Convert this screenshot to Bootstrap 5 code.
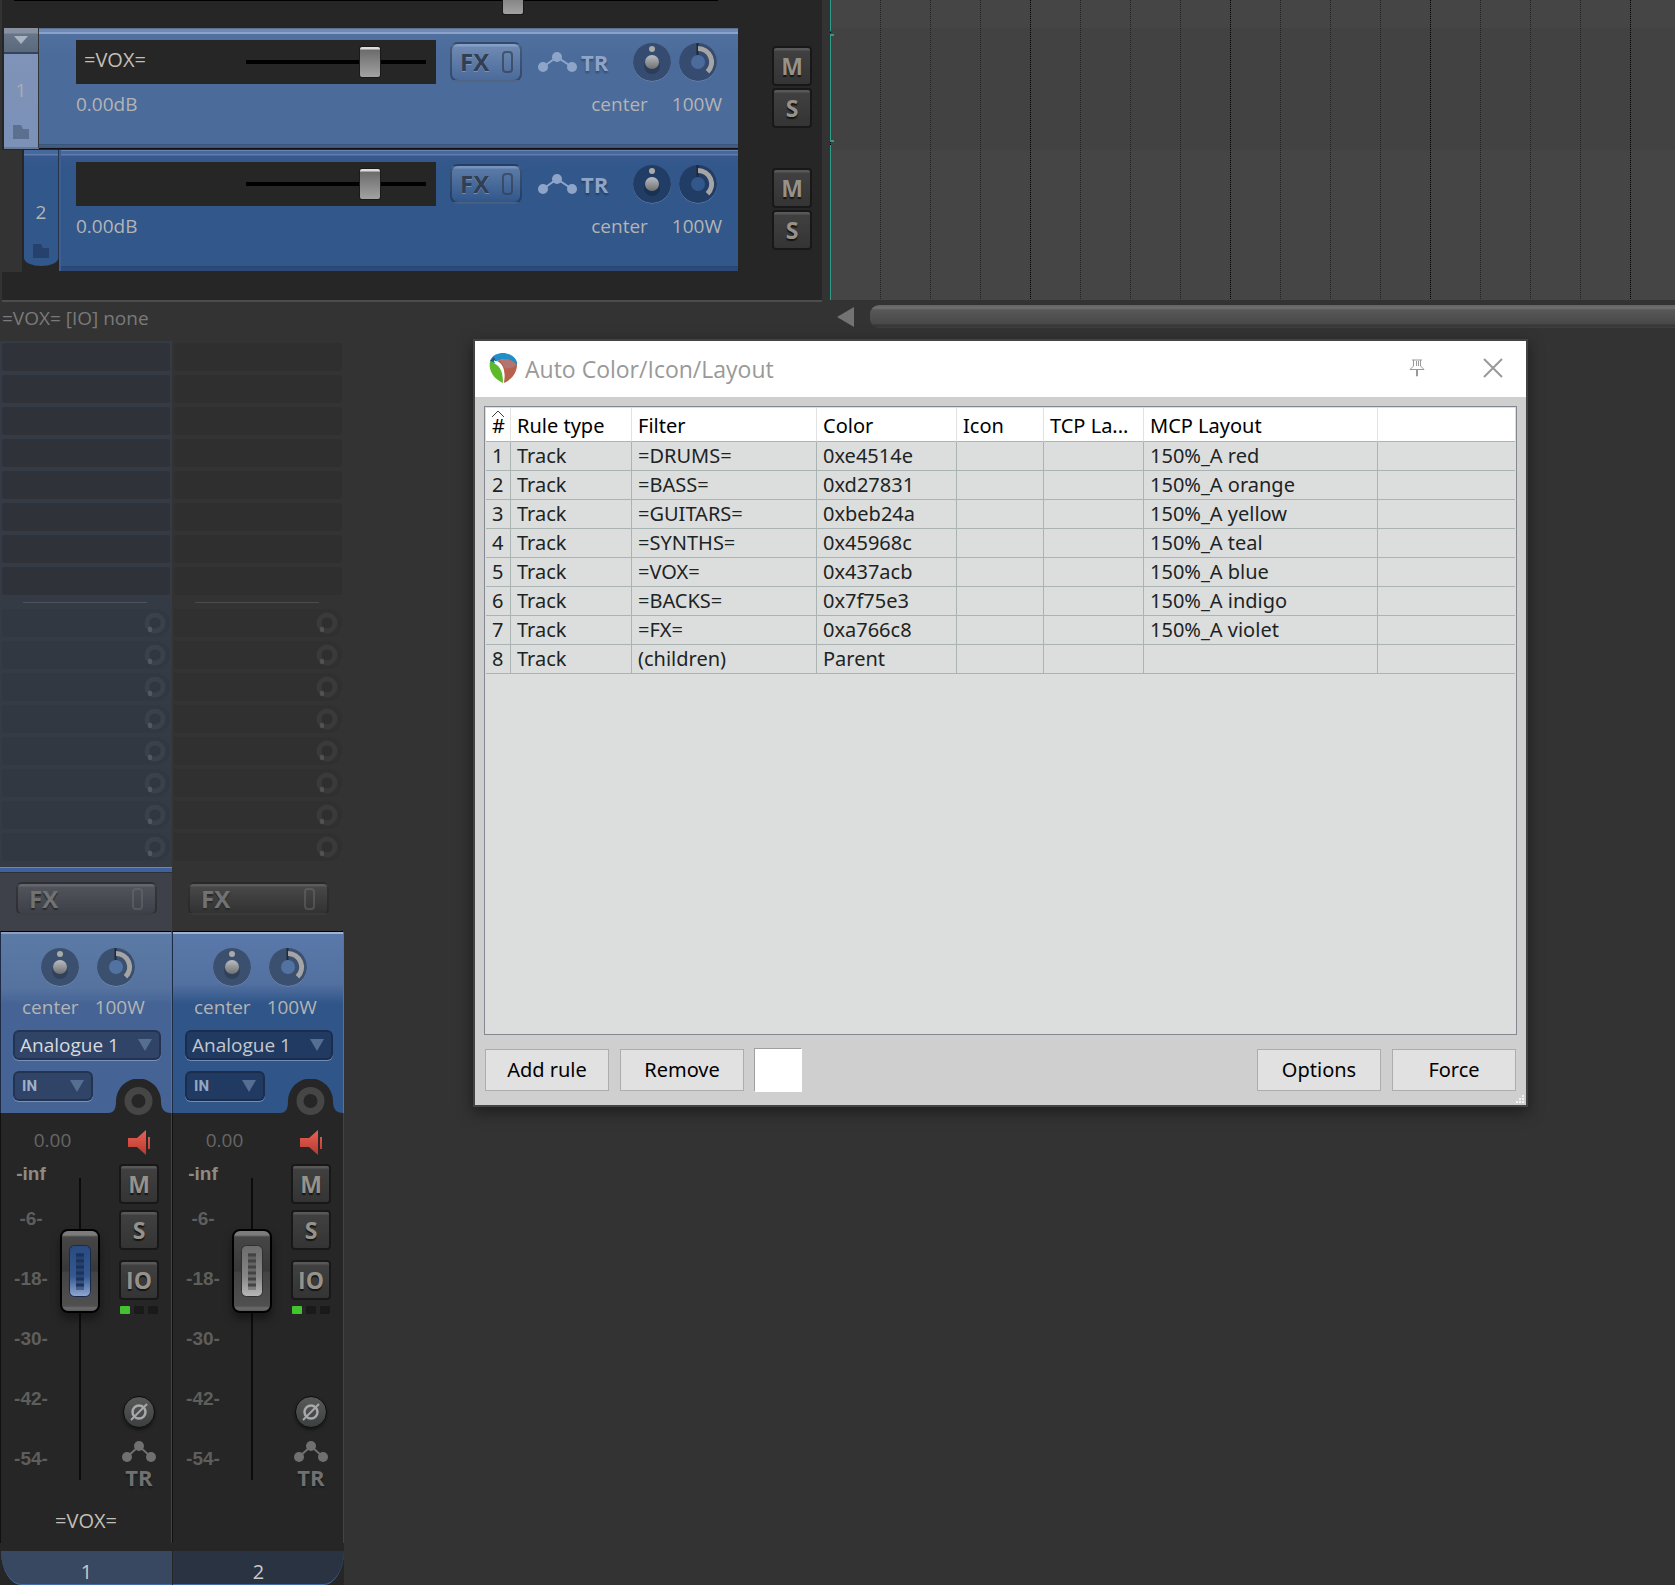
<!DOCTYPE html>
<html lang="en">
<head>
<meta charset="utf-8">
<meta name="viewport" content="width=device-width, initial-scale=1">
<title>Auto Color/Icon/Layout</title>
<link rel="stylesheet" href="https://cdn.jsdelivr.net/npm/bootstrap@5.3.0/dist/css/bootstrap.min.css">
<style>
body{background:#333;color:#b4b4b4;font:19px/24px "Open Sans","Noto Sans",sans-serif;overflow:hidden}
button,select,input{font-family:inherit;color:inherit}
button{padding:0}
svg{display:block;flex:none}

/* horizontal faders */
.hfader{appearance:none;-webkit-appearance:none;display:block;height:30px;margin:0;background:linear-gradient(#000,#000) 0 50%/100% 4px no-repeat}
.hfader::-webkit-slider-thumb{-webkit-appearance:none;width:20px;height:30px;border-radius:2px;background:linear-gradient(#ddd 2px,#6c6c6c 3px,#a2a2a2);box-shadow:0 0 0 1px #1a1a1a}

/* track control panel */
.tcp{flex:0 0 822px;margin-right:8px}
.tcp-list{height:302px;margin-left:2px;background:#262626;border-bottom:2px solid #4c4c4c;overflow:hidden}
.stub{height:28px;display:flow-root}
.stub .hfader{width:704px;margin:-16px 0 0 12px}
.trk{height:122px;--left:2px}
.gutter{width:35px;margin-left:var(--left);text-align:center;border-right:1px solid #26344c}
.trk-body{flex:1;padding:12px 16px 0 37px;height:121px}
.trk.parent .trk-body{background:linear-gradient(#5b7090 1px,#7089b5 1px,#7089b5 4px,#8ba3ca 4px,#8ba3ca 6px,#50709f 6px,#4b6b9b 28px,#4b6b9b 116px,#3b5579 116px,#3b5579 117px,#43608b 117px,#3c577d 120px,#111 120px)}
.trk.child .trk-body{background:linear-gradient(90deg,#3d5e90 2px,transparent 2px),linear-gradient(#6b85b1 1px,#46689c 1px,#46689c 4px,#5f7dae 4px,#5f7dae 5px,#38598d 6px,#31578b 20px,#31578b 116px,#294570 116px,#294570 117px,#2b4a7a 117px);padding-left:17px}
.trk.parent .gutter{background:linear-gradient(#8193b7,#7b91b8);color:#a9adb3;border-bottom:2px solid #6b7a94;height:121px;border-right-color:#333}
.fold{height:26px;width:100%;border:0;border-bottom:2px solid #31455f;background:linear-gradient(#8791a2 5px,#67758a 6px,#5a697c)}
.trk.child{--left:22px;background:linear-gradient(90deg,#333 20px,transparent 20px)}
.trk.child .gutter{background:linear-gradient(#46689c 4px,#5f7dae 4px,#5f7dae 5px,#38598d 6px,#31578b 20px);height:116px;border-radius:0 0 50% 50%/0 0 8px 8px;padding-top:26px}
.namebox{width:360px;height:44px;background:#262626;padding:0 10px 0 8px}
.namebox input[type=text]{width:160px}
.namebox .hfader{width:180px}
.plain{background:none;border:0;padding:0;color:#c4bfb4;font-size:20px;line-height:28px}
.namebox .plain{margin-top:-4px}
.fxbtn{width:72px;height:40px;border:2px solid rgba(20,30,50,.45);border-radius:8px;background:linear-gradient(rgba(200,220,255,.45) 2px,rgba(190,205,230,.3) 3px,rgba(190,205,230,0));color:#323f53;font-size:24px;font-weight:700;line-height:24px;padding:0 7px 0 8px;text-shadow:0 1px 0 rgba(160,180,210,.5)}
.fxbtn i{width:11px;height:22px;border:2px solid currentColor;border-radius:4px;opacity:.7}
.trbtn{background:none;border:0;color:#8ea5c9;font-size:22px;font-weight:700;line-height:24px;text-shadow:0 2px 2px rgba(0,0,0,.3)}
.trk-tools{flex:1;padding:0 4px 0 14px}
.trk-tools .trbtn{margin-left:15px}
.dials{gap:6px}
.ms{width:50px;margin-left:34px;padding-top:18px;gap:2px}
.key{width:40px;height:40px;border:2px solid #181818;border-radius:4px;background:linear-gradient(#585858 2px,#404040 3px,#343434);color:#96928a;font:700 23px/34px "Open Sans",sans-serif;text-shadow:0 2px 1px #151515}
.parent{--knob:#354b70;--hole:#4b6b9b}
.child{--knob:#213c65;--hole:#31578b}
.hint{color:#7a7a7a;padding:4px 2px}

/* arrange view */
.arrange{min-width:0}
.sbar{height:23px;margin:5px 0 13px 7px}
.sbar b{flex:1;height:23px;border-radius:9px 0 0 9px;margin-left:16px;background:linear-gradient(#666 1px,#707070 3px,#585858 5px,#484848 19px,#353535 20px,#404040)}

/* mixer */
.strip{width:172px}
.slots{padding:2px 2px 6px;gap:4px}
.slot{height:28px;border-radius:3px;background:#2f2f2f}
.send{height:28px;border-radius:2px 14px 14px 2px;background:#303030;padding:3px 4px 0 0;--ring:#3a3a3a;--core:#2f2f2f}
.rule{height:1px;width:124px;margin:3px auto 2px 21px;background:#4c4c4c}
.strip.sel .slots{background:#343b45}
.strip.sel .slot{background:#2f3239}
.strip.sel .send{background:#313842;--ring:#3b404b;--core:#31363f}
.strip.sel .rule{background:#4e535d}
.accent{height:6px}
.sel .accent{background:linear-gradient(#6689bd 1px,#3c619d 1px,#3c619d 5px,#2e3238 5px)}
.fxrow{height:58px;padding:9px 15px 0 16px}
.sel .fxrow{background:#3e4149}
.fxrow .fxbtn{width:141px;height:33px;border-color:rgba(35,35,35,.6);border-radius:6px;background:linear-gradient(rgba(255,255,255,.2) 2px,rgba(255,255,255,.1) 3px,rgba(255,255,255,0));color:#707273;text-shadow:0 2px 1px #2a2a2a;padding:0 12px 0 11px}
.fxrow .fxbtn i{opacity:.45}
.panel{height:182px;border-top:1px solid #000;position:relative;--knob:#3b506f;--hole:#5272a2;padding:15px 11px 0 13px;border-left:1px solid #1d2c44;border-right:1px solid #5872a0}
.sel .panel{background:linear-gradient(#8aa0bd 2px,#5c7aa6 2px,#56739f 56px,#456495 72px,#456495)}
.unsel .panel{background:linear-gradient(#9fb4d4 2px,#5a79aa 2px,#5270a0 52px,#305589 72px,#305589)}
.panel select{appearance:none;-webkit-appearance:none;display:block;height:30px;border:2px solid rgba(20,30,55,.45);border-radius:6px;padding:0 0 0 5px;font-size:19px;line-height:24px;color:#d8dade;box-shadow:0 1px 0 rgba(140,165,205,.7)}
.panel .src{width:148px;margin:11px 0 11px -1px;background:#304468 url("data:image/svg+xml,%3Csvg xmlns='http://www.w3.org/2000/svg' width='14' height='12'%3E%3Cpath d='M0 0h14L7 12z' fill='%23566e92'/%3E%3C/svg%3E") 123px 7px no-repeat}
.panel .mode{width:80px;margin-left:-1px;font:700 15px/24px Roboto,sans-serif;color:#9fb0c8;padding-left:7px;background:#304468 url("data:image/svg+xml,%3Csvg xmlns='http://www.w3.org/2000/svg' width='14' height='12'%3E%3Cpath d='M0 0h14L7 12z' fill='%23566e92'/%3E%3C/svg%3E") 55px 7px no-repeat}
.unsel .panel select{background-color:#213a61;color:#c3c8ce}
.unsel .panel .mode{color:#93a7c4}
.dialrow{gap:16px;padding-left:26px}
.hump{position:absolute;right:-1px;bottom:-5px}
.deck{height:430px;background:#262626;border-left:1px solid #111;border-right:1px solid #444}
.db{color:#666;padding:15px 0 10px 4px;text-align:center}
.scale{width:44px;margin-left:8px;text-align:center;font:700 19px/24px "Liberation Sans",sans-serif;color:#5e5e5c}
.scale span{display:block;margin-bottom:36px}
.scale .inf{color:#8e8b85;margin-bottom:21px}
.vfader{-webkit-appearance:none;appearance:none;writing-mode:vertical-lr;direction:rtl;width:40px;height:302px;margin:16px 0 0 7px;background:linear-gradient(#0c0c0c,#0c0c0c) 50% 0/2px 100% no-repeat}
.vfader::-webkit-slider-thumb{-webkit-appearance:none;width:40px;height:84px;border:2px solid #000;border-radius:8px;box-shadow:0 6px 8px rgba(0,0,0,.4);
background:var(--pill) 50% 14px/22px 52px no-repeat,linear-gradient(#7c7c7c 4px,#464646 6px,#383838 40px,#434343 41px,#505050 75px,#6c6c6c 77px,#5a5a5a)}
.sel .vfader{--pill:url("data:image/svg+xml,%3Csvg xmlns='http://www.w3.org/2000/svg' width='22' height='52'%3E%3Cdefs%3E%3ClinearGradient id='g' x2='0' y2='1'%3E%3Cstop stop-color='%232a4b82'/%3E%3Cstop offset='.6' stop-color='%2334588f'/%3E%3Cstop offset='1' stop-color='%2392a8d2'/%3E%3C/linearGradient%3E%3C/defs%3E%3Crect x='.5' y='.5' width='21' height='51' rx='5' fill='url(%23g)' stroke='%23182a4a'/%3E%3Cpath d='M7 10h8M7 16h8M7 22h8M7 28h8M7 34h8M7 40h8' stroke='%231b335c' stroke-width='3'/%3E%3Cpath d='M7 8h8v37H7z' fill='%231b335c' opacity='.5'/%3E%3C/svg%3E")}
.unsel .vfader{--pill:url("data:image/svg+xml,%3Csvg xmlns='http://www.w3.org/2000/svg' width='22' height='52'%3E%3Cdefs%3E%3ClinearGradient id='g' x2='0' y2='1'%3E%3Cstop stop-color='%236c6c6c'/%3E%3Cstop offset='.6' stop-color='%23868686'/%3E%3Cstop offset='1' stop-color='%23b8b8b8'/%3E%3C/linearGradient%3E%3C/defs%3E%3Crect x='.5' y='.5' width='21' height='51' rx='5' fill='url(%23g)' stroke='%23303030'/%3E%3Cpath d='M7 10h8M7 16h8M7 22h8M7 28h8M7 34h8M7 40h8' stroke='%23444' stroke-width='3'/%3E%3Cpath d='M7 8h8v37H7z' fill='%23444' opacity='.4'/%3E%3C/svg%3E")}
.keys{width:40px;margin-right:12px;padding-top:17px}
.keys .key + .key{margin-top:6px}
.keys .key + .key + .key{margin-top:10px}
.leds{gap:4px;margin:6px 0 0 1px}
.leds i{width:10px;height:8px;border-radius:1px;background:#1a1a1a}
.leds i:first-child{background:#43c32f}
.round{width:32px;height:32px;border:1px solid #0d0d0d;border-radius:50%;background:linear-gradient(#585a5a,#3c3f3f);color:#a8a8a8;margin:82px 0 12px;box-shadow:0 2px 3px #151515}
.keys .trbtn{color:#707070;line-height:22px;gap:4px}
.tname{width:100%;text-align:center;display:block;margin-top:19px}
.foot{background:#262626;padding-top:8px}
.tab{height:34px;line-height:42px;text-align:center;font-size:20px;color:#c9c9c9;overflow:hidden;border-bottom:1px solid #456aa6;margin-left:1px}
.sel .tab{background:#384861;border-bottom-left-radius:28px 46px}
.unsel .tab{background:#2a3342;border-bottom-right-radius:28px 46px}

/* floating rule editor */
.dlg{position:absolute;left:475px;right:149px;top:341px;background:#cfcfcf;color:#000;font:20px/24px "Noto Sans","Open Sans",sans-serif;box-shadow:0 0 0 2px #434343,0 5px 14px 3px rgba(0,0,0,.4)}
.dlg-bar{height:56px;background:#fff;padding:0 23px 2px 13px;color:#999}
.dlg-bar h1{font:23px/32px "Open Sans",sans-serif;margin:2px auto 0 7px}
.dlg-bar button{border:0;background:none;color:#999}
.dlg-bar .pin{margin-right:58px}
.frame{height:629px;margin:9px 9px 0;border:1px solid #828790;background:#dcdedd;padding:1px}
.rules{table-layout:fixed;width:100%;border-collapse:separate;border-spacing:0;color:#1d2424}
.rules th{background:#fff;color:#000;font-weight:400;height:34px;border-right:1px solid #e2e2e2;border-bottom:1px solid #aab4b2;padding:2px 0 0 6px;position:relative;white-space:nowrap}
.rules td{height:29px;padding:0 0 0 6px;border-right:1px solid #aab4b2;border-bottom:1px solid #aab4b2;white-space:nowrap}
.rules tr>:last-child{border-right:0}
.rules th svg{position:absolute;left:5px;top:2px}
.acts{padding:13px 10px;gap:11px}
.acts button{width:124px;height:42px;background:#e1e1e1;border:1px solid #adadad}
.acts .swatch{width:48px;height:44px;margin-left:-1px;background:#fff;border:1px solid #fff;border-top-color:#a0a0a0;border-left-color:#a0a0a0}
.grip{position:absolute;right:1px;bottom:1px}
</style>
<script src="https://cdn.jsdelivr.net/npm/bootstrap@5.3.0/dist/js/bootstrap.bundle.min.js"></script>
</head>
<body>
<svg width="0" height="0" class="position-absolute" aria-hidden="true">
<defs>
<linearGradient id="ball" x2="0" y2="1"><stop stop-color="#b9bcc2"/><stop offset="1" stop-color="#707070"/></linearGradient>
<linearGradient id="red" x2="0" y2="1"><stop stop-color="#ec6055"/><stop offset="1" stop-color="#b53a30"/></linearGradient>
<symbol id="pan" viewBox="0 0 40 40"><circle cx="20" cy="20.5" r="19" fill="#8fa7cd" opacity=".7"/><circle cx="20" cy="20" r="19" fill="var(--knob)"/><circle cx="20" cy="24" r="8" fill="#000" opacity=".18"/><circle cx="20" cy="20" r="7" fill="url(#ball)"/><circle cx="20" cy="7" r="3" fill="#aaa"/></symbol>
<symbol id="wid" viewBox="0 0 40 40"><circle cx="20" cy="20.5" r="19" fill="#8fa7cd" opacity=".7"/><circle cx="20" cy="20" r="19" fill="var(--knob)"/><circle cx="20" cy="20" r="7" fill="var(--hole)"/><path d="M19.500 1v12" stroke="#1d2838" stroke-width="2"/><path d="M20 6.500A13.500 13.500 0 0 1 29.500 29.700" fill="none" stroke="#a5a5a5" stroke-width="5"/></symbol>
<symbol id="route" viewBox="0 0 40 24"><path d="M6 17L20 7l15 10" fill="none" stroke="currentColor" stroke-width="2"/><circle cx="6" cy="17" r="5" fill="currentColor"/><circle cx="20" cy="7" r="5" fill="currentColor"/><circle cx="35" cy="17" r="5" fill="currentColor"/></symbol>
<symbol id="route2" viewBox="0 0 36 22"><path d="M6 17L18 6l12 11" fill="none" stroke="currentColor" stroke-width="2"/><circle cx="6" cy="17" r="5" fill="currentColor"/><circle cx="18" cy="6" r="5" fill="currentColor"/><circle cx="30" cy="17" r="5" fill="currentColor"/></symbol>
<symbol id="ring" viewBox="0 0 22 22"><circle cx="11" cy="11" r="8" fill="none" stroke="var(--ring)" stroke-width="5"/><circle cx="11" cy="11" r="5" fill="var(--core)"/><rect x="4" y="15" width="4" height="5" rx="1" fill="#fff" opacity=".12"/></symbol>
<symbol id="folder" viewBox="0 0 16 14"><path d="M0 0h8l2 4h6v10H0z" fill="currentColor"/></symbol>
<symbol id="hump" viewBox="0 0 64 39"><path d="M0 34C6 34 8 30 8 22a22.500 22.500 0 0 1 45 0C53 30 56 34 63 34V39H0z" fill="#262626"/><circle cx="30.500" cy="22" r="10.500" fill="none" stroke="#464646" stroke-width="7"/></symbol>
<symbol id="spk" viewBox="0 0 24 26"><path d="M1 8h9l9-8v25l-9-8H1zM21 7h2v12h-2z" fill="url(#red)"/></symbol>
</defs>
</svg>

<main class="d-flex flex-column">
<section class="d-flex">
  <div class="tcp">
    <div class="tcp-list">
      <div class="stub"><input type="range" class="hfader" min="0" max="684" value="489" aria-label="Master volume"></div>
      <div class="trk parent d-flex">
        <div class="gutter d-flex flex-column align-items-center">
          <button class="fold d-flex justify-content-center align-items-center" aria-label="Fold"><svg width="14" height="8"><path d="M0 0h14L7 8z" fill="#a9b3c2"/></svg></button>
          <span class="mt-4">1</span>
          <svg class="mt-auto mb-2" width="16" height="14" color="#5b6f8e"><use href="#folder"/></svg>
        </div>
        <div class="trk-body">
          <div class="d-flex align-items-center">
            <div class="namebox d-flex align-items-center justify-content-between"><input type="text" class="plain" value="=VOX=" aria-label="Track 1 name"><input type="range" class="hfader" min="0" max="160" value="114" aria-label="Track 1 volume"></div>
            <div class="trk-tools d-flex align-items-center">
              <button class="fxbtn d-flex align-items-center justify-content-between">FX<i></i></button>
              <button class="trbtn d-flex align-items-center gap-1"><svg width="40" height="24"><use href="#route"/></svg>TR</button>
              <div class="dials d-flex ms-auto"><svg width="40" height="40" role="img" aria-label="Pan"><use href="#pan"/></svg><svg width="40" height="40" role="img" aria-label="Width"><use href="#wid"/></svg></div>
            </div>
          </div>
          <div class="d-flex pt-2"><span class="me-auto">0.00dB</span><span class="me-4">center</span><span>100W</span></div>
        </div>
        <div class="ms d-flex flex-column"><button class="key">M</button><button class="key">S</button></div>
      </div>
      <div class="trk child d-flex">
        <div class="gutter d-flex flex-column align-items-center">
          <span class="mt-4">2</span>
          <svg class="mt-auto mb-2" width="16" height="14" color="#26416c"><use href="#folder"/></svg>
        </div>
        <div class="trk-body">
          <div class="d-flex align-items-center">
            <div class="namebox d-flex align-items-center justify-content-between"><input type="text" class="plain" value="" aria-label="Track 2 name"><input type="range" class="hfader" min="0" max="160" value="114" aria-label="Track 2 volume"></div>
            <div class="trk-tools d-flex align-items-center">
              <button class="fxbtn d-flex align-items-center justify-content-between">FX<i></i></button>
              <button class="trbtn d-flex align-items-center gap-1"><svg width="40" height="24"><use href="#route"/></svg>TR</button>
              <div class="dials d-flex ms-auto"><svg width="40" height="40" role="img" aria-label="Pan"><use href="#pan"/></svg><svg width="40" height="40" role="img" aria-label="Width"><use href="#wid"/></svg></div>
            </div>
          </div>
          <div class="d-flex pt-2"><span class="me-auto">0.00dB</span><span class="me-4">center</span><span>100W</span></div>
        </div>
        <div class="ms d-flex flex-column"><button class="key">M</button><button class="key">S</button></div>
      </div>
    </div>
    <div class="hint">=VOX= [IO] none</div>
  </div>
  <div class="arrange flex-grow-1">
    <svg width="100%" height="300" shape-rendering="crispEdges" aria-hidden="true">
      <defs><pattern id="bars" width="200" height="2" patternUnits="userSpaceOnUse"><path d="M50 0h1v1h-1zM100 0h1v1h-1zM150 0h1v1h-1z" fill="#222"/><path d="M0 0h1v1H0z" fill="#000"/></pattern></defs>
      <rect width="100%" height="300" fill="#454545"/><rect y="28" width="100%" height="122" fill="#424242"/>
      <rect width="100%" height="300" fill="url(#bars)"/>
      <path d="M0 0h1v31H0zM0 34h4v2H1v104h3v2H0zM0 145h1v155H0z" fill="#2f9c8a"/>
    </svg>
    <div class="sbar d-flex align-items-center"><svg width="17" height="20"><path d="M17 0v20L0 10z" fill="#737373"/></svg><b></b></div>
  </div>
</section>

<section class="d-flex">
  <article class="strip sel">
    <div class="slots d-flex flex-column">
      <div class="slot"></div><div class="slot"></div><div class="slot"></div><div class="slot"></div><div class="slot"></div><div class="slot"></div><div class="slot"></div><div class="slot"></div>
      <div class="rule"></div>
      <div class="send d-flex justify-content-end"><svg width="22" height="22"><use href="#ring"/></svg></div>
      <div class="send d-flex justify-content-end"><svg width="22" height="22"><use href="#ring"/></svg></div>
      <div class="send d-flex justify-content-end"><svg width="22" height="22"><use href="#ring"/></svg></div>
      <div class="send d-flex justify-content-end"><svg width="22" height="22"><use href="#ring"/></svg></div>
      <div class="send d-flex justify-content-end"><svg width="22" height="22"><use href="#ring"/></svg></div>
      <div class="send d-flex justify-content-end"><svg width="22" height="22"><use href="#ring"/></svg></div>
      <div class="send d-flex justify-content-end"><svg width="22" height="22"><use href="#ring"/></svg></div>
      <div class="send d-flex justify-content-end"><svg width="22" height="22"><use href="#ring"/></svg></div>
    </div>
    <div class="accent"></div>
    <div class="fxrow"><button class="fxbtn d-flex align-items-center justify-content-between">FX<i></i></button></div>
    <div class="panel">
      <div class="dialrow d-flex"><svg width="40" height="40" role="img" aria-label="Pan"><use href="#pan"/></svg><svg width="40" height="40" role="img" aria-label="Width"><use href="#wid"/></svg></div>
      <div class="d-flex gap-3 pt-2 ps-2"><span>center</span><span>100W</span></div>
      <select class="src" aria-label="Input"><option>Analogue 1</option></select>
      <select class="mode" aria-label="Input mode"><option>IN</option></select>
      <svg class="hump" width="64" height="39"><use href="#hump"/></svg>
    </div>
    <div class="deck">
      <div class="d-flex">
        <div>
          <div class="db">0.00</div>
          <div class="d-flex">
            <div class="scale"><span class="inf">-inf</span><span>-6-</span><span>-18-</span><span>-30-</span><span>-42-</span><span class="mb-0">-54-</span></div>
            <input type="range" class="vfader" min="0" max="218" value="167" aria-label="Strip 1 volume">
          </div>
        </div>
        <div class="keys ms-auto d-flex flex-column">
          <svg class="mx-auto mb-2" width="24" height="26"><use href="#spk"/></svg>
          <button class="key">M</button><button class="key">S</button><button class="key">IO</button>
          <div class="leds d-flex"><i></i><i></i><i></i></div>
          <button class="round d-flex align-items-center justify-content-center mx-auto" aria-label="Phase"><svg width="18" height="18"><circle cx="9" cy="9" r="6.500" fill="none" stroke="currentColor" stroke-width="2.500"/><path d="M1 17L17 1" stroke="currentColor" stroke-width="2"/></svg></button>
          <button class="trbtn d-flex flex-column align-items-center"><svg width="36" height="22"><use href="#route2"/></svg>TR</button>
        </div>
      </div>
      <input type="text" class="plain tname" value="=VOX=" aria-label="Strip 1 name">
    </div>
    <div class="foot"><div class="tab">1</div></div>
  </article>
  <article class="strip unsel">
    <div class="slots d-flex flex-column">
      <div class="slot"></div><div class="slot"></div><div class="slot"></div><div class="slot"></div><div class="slot"></div><div class="slot"></div><div class="slot"></div><div class="slot"></div>
      <div class="rule"></div>
      <div class="send d-flex justify-content-end"><svg width="22" height="22"><use href="#ring"/></svg></div>
      <div class="send d-flex justify-content-end"><svg width="22" height="22"><use href="#ring"/></svg></div>
      <div class="send d-flex justify-content-end"><svg width="22" height="22"><use href="#ring"/></svg></div>
      <div class="send d-flex justify-content-end"><svg width="22" height="22"><use href="#ring"/></svg></div>
      <div class="send d-flex justify-content-end"><svg width="22" height="22"><use href="#ring"/></svg></div>
      <div class="send d-flex justify-content-end"><svg width="22" height="22"><use href="#ring"/></svg></div>
      <div class="send d-flex justify-content-end"><svg width="22" height="22"><use href="#ring"/></svg></div>
      <div class="send d-flex justify-content-end"><svg width="22" height="22"><use href="#ring"/></svg></div>
    </div>
    <div class="accent"></div>
    <div class="fxrow"><button class="fxbtn d-flex align-items-center justify-content-between">FX<i></i></button></div>
    <div class="panel">
      <div class="dialrow d-flex"><svg width="40" height="40" role="img" aria-label="Pan"><use href="#pan"/></svg><svg width="40" height="40" role="img" aria-label="Width"><use href="#wid"/></svg></div>
      <div class="d-flex gap-3 pt-2 ps-2"><span>center</span><span>100W</span></div>
      <select class="src" aria-label="Input"><option>Analogue 1</option></select>
      <select class="mode" aria-label="Input mode"><option>IN</option></select>
      <svg class="hump" width="64" height="39"><use href="#hump"/></svg>
    </div>
    <div class="deck">
      <div class="d-flex">
        <div>
          <div class="db">0.00</div>
          <div class="d-flex">
            <div class="scale"><span class="inf">-inf</span><span>-6-</span><span>-18-</span><span>-30-</span><span>-42-</span><span class="mb-0">-54-</span></div>
            <input type="range" class="vfader" min="0" max="218" value="167" aria-label="Strip 2 volume">
          </div>
        </div>
        <div class="keys ms-auto d-flex flex-column">
          <svg class="mx-auto mb-2" width="24" height="26"><use href="#spk"/></svg>
          <button class="key">M</button><button class="key">S</button><button class="key">IO</button>
          <div class="leds d-flex"><i></i><i></i><i></i></div>
          <button class="round d-flex align-items-center justify-content-center mx-auto" aria-label="Phase"><svg width="18" height="18"><circle cx="9" cy="9" r="6.500" fill="none" stroke="currentColor" stroke-width="2.500"/><path d="M1 17L17 1" stroke="currentColor" stroke-width="2"/></svg></button>
          <button class="trbtn d-flex flex-column align-items-center"><svg width="36" height="22"><use href="#route2"/></svg>TR</button>
        </div>
      </div>
      <input type="text" class="plain tname" value="" aria-label="Strip 2 name">
    </div>
    <div class="foot"><div class="tab">2</div></div>
  </article>
</section>
</main>

<section class="dlg" role="dialog" aria-labelledby="dlgTitle">
  <header class="dlg-bar d-flex align-items-center">
    <svg width="30" height="32" viewBox="0 0 30 32"><path d="M2 9C4 3 10 1 15 1s12 3 14 9v5C26 8 18 5 9 9L5 12z" fill="#1f8ecb"/><path d="M2 9l4-4 2 5z" fill="#35506a"/><path d="M2 9c9 4 13 8 13 22C6 27 0 19 2 9z" fill="#5dbb2b"/><path d="M9 9c8-4 16-2 20 4 0 8-6 15-13 18 1-10 1-18-7-22z" fill="#b9604d"/><path d="M12 8c7-2 13 0 16 5-4 3-8 4-11 3z" fill="#b17672"/><path d="M6 9c7 4 10 9 9.500 20C17 19 14 11 6 9z" fill="#fff" stroke="#fff"/></svg>
    <h1 id="dlgTitle">Auto Color/Icon/Layout</h1>
    <button aria-label="Pin" class="pin"><svg width="16" height="18" fill="none" stroke="currentColor"><path d="M3 1h10M4.500 1v6M11.500 1v6M7.500 2v5M9.500 2v5M4.500 7L1 10.500h14L11.500 7M7.500 11v6h1v-6"/></svg></button>
    <button aria-label="Close"><svg width="20" height="20" stroke="currentColor" stroke-width="2"><path d="M1 1l18 18M19 1L1 19"/></svg></button>
  </header>
  <div class="frame">
    <table class="rules">
      <colgroup><col style="width:25px"><col style="width:121px"><col style="width:185px"><col style="width:140px"><col style="width:87px"><col style="width:100px"><col style="width:234px"><col></colgroup>
      <thead><tr><th><svg width="14" height="8" fill="none" stroke="#444"><path d="M1 7l6-6 6 6"/></svg>#</th><th>Rule type</th><th>Filter</th><th>Color</th><th>Icon</th><th>TCP La...</th><th>MCP Layout</th><th></th></tr></thead>
      <tbody>
      <tr><td>1</td><td>Track</td><td>=DRUMS=</td><td>0xe4514e</td><td></td><td></td><td>150%_A red</td><td></td></tr>
      <tr><td>2</td><td>Track</td><td>=BASS=</td><td>0xd27831</td><td></td><td></td><td>150%_A orange</td><td></td></tr>
      <tr><td>3</td><td>Track</td><td>=GUITARS=</td><td>0xbeb24a</td><td></td><td></td><td>150%_A yellow</td><td></td></tr>
      <tr><td>4</td><td>Track</td><td>=SYNTHS=</td><td>0x45968c</td><td></td><td></td><td>150%_A teal</td><td></td></tr>
      <tr><td>5</td><td>Track</td><td>=VOX=</td><td>0x437acb</td><td></td><td></td><td>150%_A blue</td><td></td></tr>
      <tr><td>6</td><td>Track</td><td>=BACKS=</td><td>0x7f75e3</td><td></td><td></td><td>150%_A indigo</td><td></td></tr>
      <tr><td>7</td><td>Track</td><td>=FX=</td><td>0xa766c8</td><td></td><td></td><td>150%_A violet</td><td></td></tr>
      <tr><td>8</td><td>Track</td><td>(children)</td><td>Parent</td><td></td><td></td><td></td><td></td></tr>
      </tbody>
    </table>
  </div>
  <footer class="acts d-flex align-items-center">
    <button>Add rule</button><button>Remove</button><button class="swatch" aria-label="Colour"></button>
    <button class="ms-auto">Options</button><button>Force</button>
  </footer>
  <svg class="grip" width="10" height="10" fill="#f4f4f4" aria-hidden="true"><path d="M7 1h2v2H7zM4 4h2v2H4zM7 4h2v2H7zM1 7h2v2H1zM4 7h2v2H4zM7 7h2v2H7z"/></svg>
</section>
</body>
</html>
